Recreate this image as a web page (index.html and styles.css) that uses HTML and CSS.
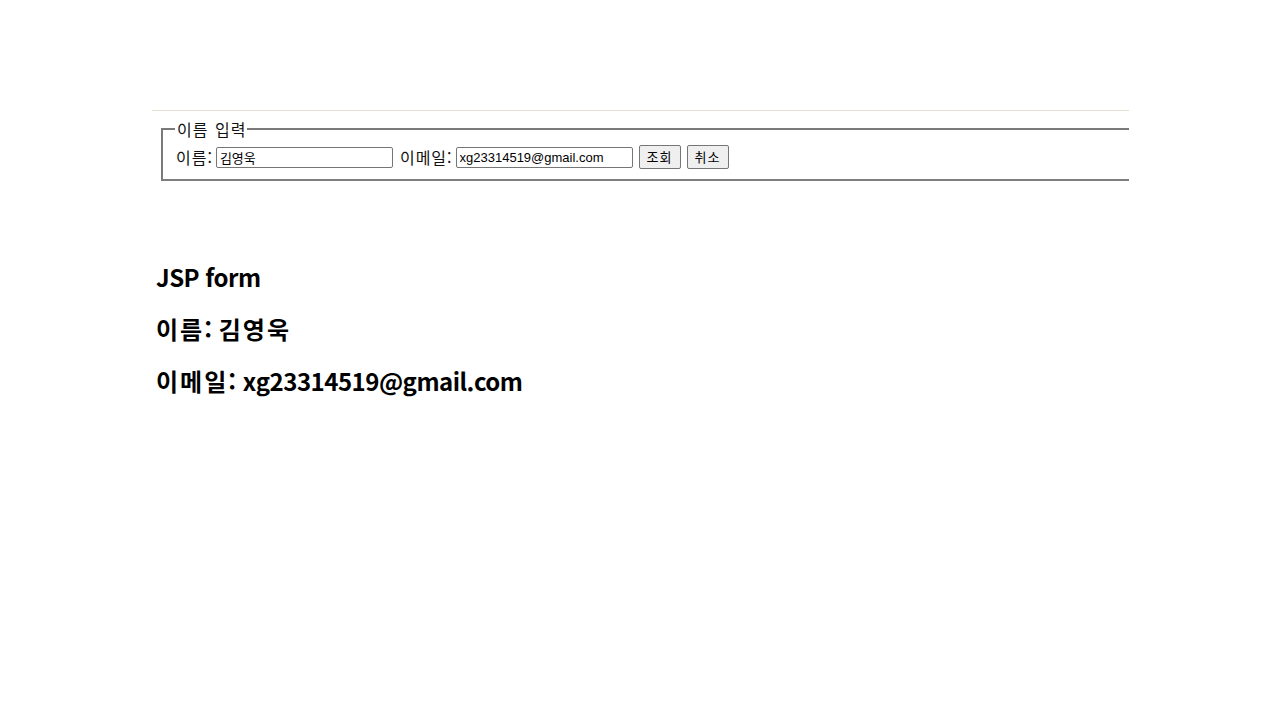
FILE: index.html
```html
<!DOCTYPE html>
<html lang="ko">
<head>
<meta charset="utf-8">
<title>JSP form</title>
<link rel="stylesheet" href="styles.css">
</head>
<body>
<div class="page">
  <hr class="rule">
  <div class="clip">
    <form class="form">
      <fieldset class="box">
        <legend class="legend">이름 입력</legend>
        <div class="row">
          <label class="lbl" for="name">이름:</label>
          <input class="field" id="name" type="text" value="김영욱">
          <label class="lbl lbl-gap" for="email">이메일:</label>
          <input class="field" id="email" type="text" value="xg23314519@gmail.com">
          <button class="btn btn-first" type="button">조회</button>
          <button class="btn" type="button">취소</button>
        </div>
      </fieldset>
    </form>
  </div>
  <div class="result">
    <h2 class="line"><span class="lat">JSP form</span></h2>
    <h2 class="line"><span class="ko">이름</span>: <span class="ko">김영욱</span></h2>
    <h2 class="line"><span class="ko">이메일</span>: <span class="lat">xg23314519@gmail.com</span></h2>
  </div>
</div>
</body>
</html>
```

FILE: styles.css
```css
html, body {
  margin: 0;
  padding: 0;
  background: #ffffff;
}

body {
  font-family: "Noto Sans CJK KR", "Noto Sans", sans-serif;
  color: #000;
}

.page {
  width: 977px;
  margin-left: 152px;
  padding-top: 102px;
}

.rule {
  margin: 8px 0;
  border: 0;
  height: 1px;
  background: #e4dfd2;
}

.clip {
  overflow: hidden;
}

.form {
  margin: 0;
}

.box {
  margin: 0 0 0 9px;
  width: 1100px;
  padding: 5px 12px 10px 13px;
  border: 2px solid #7a7a7a;
  border-bottom-color: #7e7e7e;
}

.legend {
  padding: 0 1px 0 2px;
  margin-left: -1px;
  font-size: 16px;
  line-height: 20px;
  letter-spacing: 1px;
  word-spacing: 1px;
  font-family: "Noto Sans CJK KR", sans-serif;
  color: #111;
}

.row {
  display: flex;
  align-items: center;
  height: 25px;
  font-size: 16px;
  color: #111;
}

.lbl {
  line-height: 20px;
  letter-spacing: 1px;
  margin-right: 3px;
}

.lbl-gap {
  margin-left: 7px;
}

.field {
  box-sizing: border-box;
  width: 177px;
  height: 21px;
  margin: 1px 0 0 0;
  padding: 1px 3px;
  border: 1px solid #767676;
  border-radius: 2px;
  font-family: "Liberation Sans", "Noto Sans CJK KR", sans-serif;
  font-size: 13px;
  color: #000;
  background: #fff;
}

.btn {
  box-sizing: border-box;
  height: 24px;
  width: 42px;
  margin: 0 0 0 6px;
  padding: 0;
  border: 1px solid #767676;
  border-radius: 2px;
  background: #efefef;
  font-family: "Noto Sans CJK KR", sans-serif;
  font-size: 13px;
  letter-spacing: 1px;
  color: #000;
}

.result {
  padding-top: 80px;
  padding-left: 4px;
}

.line {
  margin: 0 0 20px 0;
  font-size: 24px;
  line-height: 32px;
  font-weight: bold;
  font-family: "Noto Sans CJK KR", sans-serif;
}

.ko {
  letter-spacing: 2px;
}

.lat {
  letter-spacing: -0.5px;
}
```
